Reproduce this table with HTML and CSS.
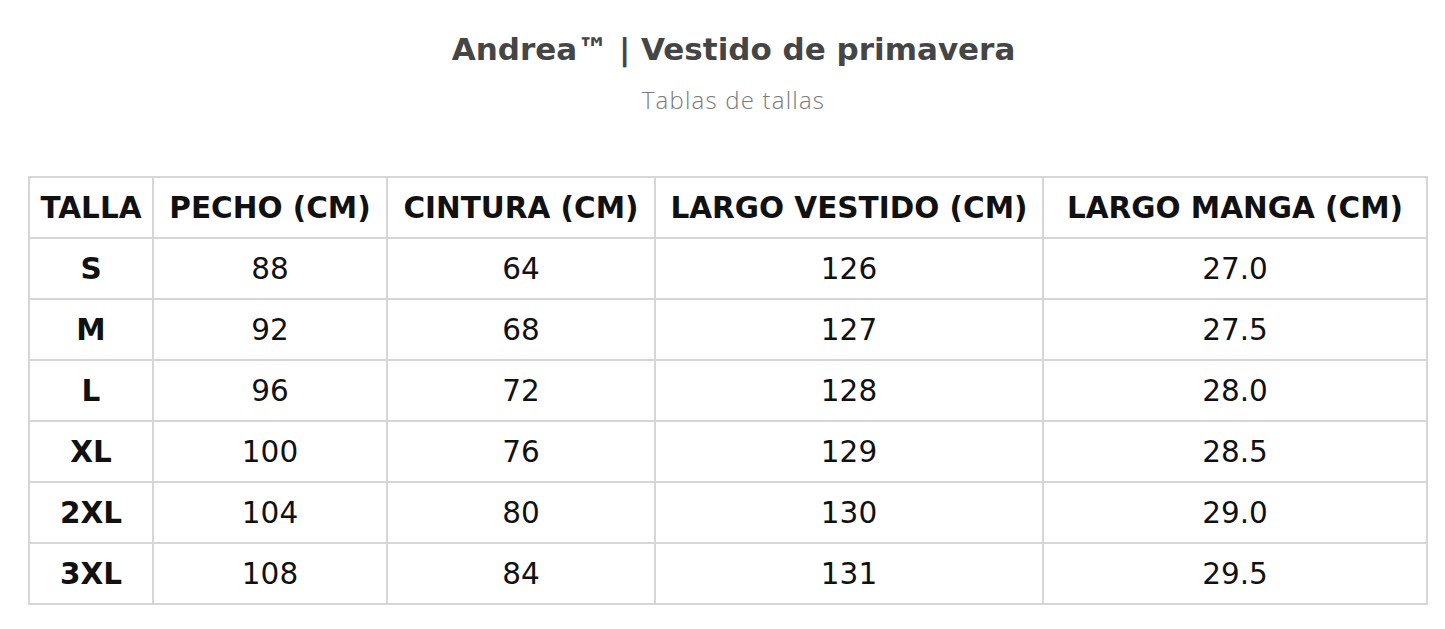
FILE: index.html
```html
<!DOCTYPE html>
<html lang="es">
<head>
<meta charset="utf-8">
<title>Andrea™ | Vestido de primavera</title>
<link rel="stylesheet" href="styles.css">
</head>
<body>
<header class="head">
  <h1 class="title">Andrea™ | Vestido de primavera</h1>
  <p class="subtitle">Tablas de tallas</p>
</header>
<table class="sizes">
  <colgroup>
    <col class="c1"><col class="c2"><col class="c3"><col class="c4"><col class="c5">
  </colgroup>
  <thead>
    <tr><th>TALLA</th><th>PECHO (CM)</th><th>CINTURA (CM)</th><th>LARGO VESTIDO (CM)</th><th>LARGO MANGA (CM)</th></tr>
  </thead>
  <tbody>
    <tr><th>S</th><td>88</td><td>64</td><td>126</td><td>27.0</td></tr>
    <tr><th>M</th><td>92</td><td>68</td><td>127</td><td>27.5</td></tr>
    <tr><th>L</th><td>96</td><td>72</td><td>128</td><td>28.0</td></tr>
    <tr><th>XL</th><td>100</td><td>76</td><td>129</td><td>28.5</td></tr>
    <tr><th>2XL</th><td>104</td><td>80</td><td>130</td><td>29.0</td></tr>
    <tr><th>3XL</th><td>108</td><td>84</td><td>131</td><td>29.5</td></tr>
  </tbody>
</table>
</body>
</html>
```
FILE: styles.css
```css
html, body {
  margin: 0;
  padding: 0;
  background: #fff;
}
body {
  font-family: "DejaVu Sans", "Liberation Sans", sans-serif;
  color: #111;
}
.head {
  text-align: center;
  padding: 28px 0 0 22px;
}
.title {
  margin: 0;
  font-size: 31px;
  line-height: 42px;
  font-weight: 700;
  color: #454545;
}
.subtitle {
  margin: 16px 0 0;
  font-family: "Open Sans", sans-serif;
  font-size: 24px;
  line-height: 28px;
  font-weight: 300;
  letter-spacing: 1.2px;
  color: #7a7a7a;
}
.sizes {
  margin: 62px 0 0 28px;
  border-collapse: collapse;
  table-layout: fixed;
  width: 1398px;
}
.c1 { width: 124px; }
.c2 { width: 234px; }
.c3 { width: 268px; }
.c4 { width: 388px; }
.c5 { width: 384px; }
.sizes th, .sizes td {
  border: 2px solid #d6d6d6;
  height: 59px;
  padding: 0;
  text-align: center;
  color: #111;
  white-space: nowrap;
}
.sizes th {
  font-weight: 700;
  font-size: 29.5px;
}
.sizes td {
  font-weight: 400;
  font-size: 29.5px;
}
```
